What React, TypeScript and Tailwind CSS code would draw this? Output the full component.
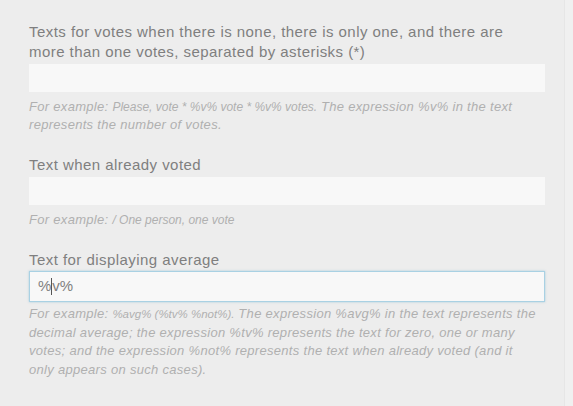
import React from 'react';

// Field data
const fields = [
    {
        label: 'Texts for votes when there is none, there is only one, and there are more than one votes, separated by asterisks (*)',
        example: 'Please, vote * %v% vote * %v% votes.',
        rest: ' The expression %v% in the text represents the number of votes.',
    },
    {
        label: 'Text when already voted',
        example: '/ One person, one vote',
        rest: '',
    },
];

const Label: React.FC<{ text: string }> = ({ text }) => (
    <div className="text-[15px] leading-[20px] tracking-[0.45px] text-[#7f7f7f] pr-[40px]">{text}</div>
);

const App: React.FC = () => {
    return (
        <div
            className="w-[573px] h-[406px] overflow-hidden bg-[#ededed] flex"
            style={{ fontFamily: '"Liberation Sans", Arial, sans-serif' }}
        >
            <div className="w-[564px] pl-[29px] pr-[19px] pt-[22px]">
                {fields.map((f, i) => (
                    <div key={i} className="mb-[21px]">
                        <Label text={f.label} />
                        <div className="mt-[2px] h-[28px] bg-[#f8f8f8]" />
                        <p className="mt-[6px] text-[13px] leading-[18px] tracking-[0.3px] italic text-[#b0b0b0] pr-[20px]">
                            For example: <span className="text-[12px] tracking-normal">{f.example}</span>
                            {f.rest}
                        </p>
                    </div>
                ))}

                {/* Focused field */}
                <div>
                    <Label text="Text for displaying average" />
                    <div className="mt-[1px] h-[31px] bg-[#f8f8f8] border border-[#a9d1e3] shadow-[0_0_2px_rgba(120,180,210,0.6)] flex items-center pl-[8px] text-[15px] text-[#7f7f7f]">
                        <span>%</span>
                        <span className="inline-block w-px h-[17px] bg-[#555]" />
                        <span>v%</span>
                    </div>
                    <p className="mt-[3px] text-[13px] leading-[18.5px] tracking-[0.3px] italic text-[#b0b0b0] pr-[5px]">
                        For example: <span className="text-[11.5px] tracking-normal">%avg% (%tv% %not%).</span> The expression %avg% in the text represents the decimal average; the expression %tv% represents the text for zero, one or many votes; and the expression %not% represents the text when already voted (and it only appears on such cases).
                    </p>
                </div>
            </div>
            <div className="flex-1 bg-[#f0f0f0] border-l border-[#e6e6e6]" />
        </div>
    );
};

export default App;
